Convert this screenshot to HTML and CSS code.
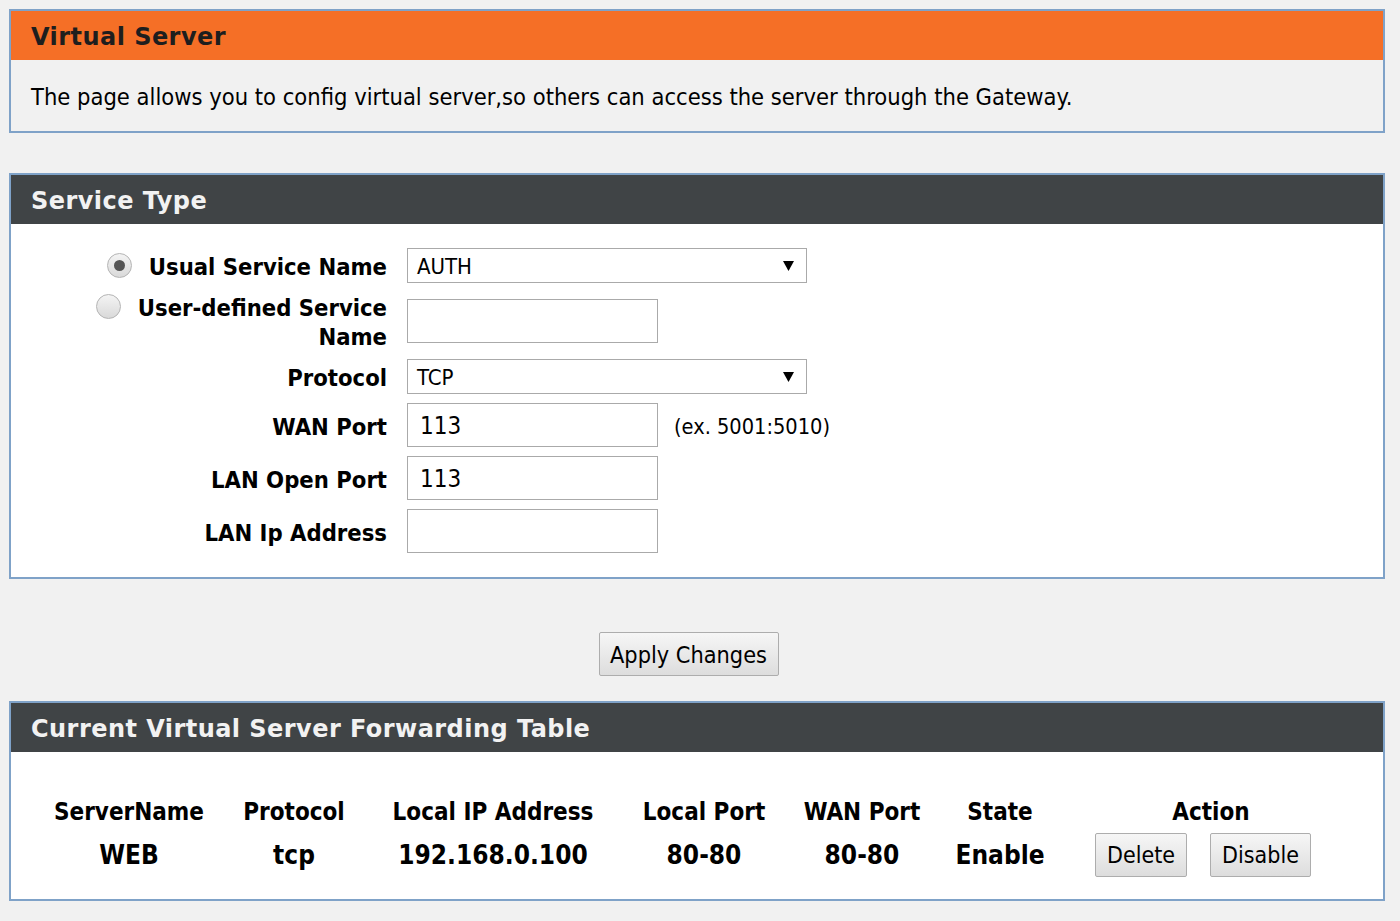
FILE: index.html
```html
<!DOCTYPE html>
<html>
<head>
<meta charset="utf-8">
<title>Virtual Server</title>
<link rel="stylesheet" href="styles.css">
</head>
<body>
<section class="panel panel-intro">
  <h1 class="panel-title title-orange">Virtual Server</h1>
  <p class="intro-text">The page allows you to config virtual server,so others can access the server through the Gateway.</p>
</section>

<section class="panel panel-form">
  <h2 class="panel-title title-dark">Service Type</h2>
  <div class="form-grid">
    <div class="label"><span class="radio checked"></span>Usual Service Name</div>
    <div class="field"><div class="select"><span>AUTH</span><svg class="arrow" width="11" height="10" viewBox="0 0 11 10"><path d="M0 0H11L5.5 10Z" fill="#000"/></svg></div></div>

    <div class="label"><span class="radio"></span>User-defined Service Name</div>
    <div class="field"><div class="input"></div></div>

    <div class="label">Protocol</div>
    <div class="field"><div class="select"><span>TCP</span><svg class="arrow" width="11" height="10" viewBox="0 0 11 10"><path d="M0 0H11L5.5 10Z" fill="#000"/></svg></div></div>

    <div class="label">WAN Port</div>
    <div class="field"><div class="input">113</div><span class="hint">(ex. 5001:5010)</span></div>

    <div class="label">LAN Open Port</div>
    <div class="field"><div class="input">113</div></div>

    <div class="label">LAN Ip Address</div>
    <div class="field"><div class="input"></div></div>
  </div>
</section>

<div class="apply-row"><button class="btn btn-apply">Apply Changes</button></div>

<section class="panel panel-table">
  <h2 class="panel-title title-dark">Current Virtual Server Forwarding Table</h2>
  <div class="fw-table">
    <div class="th">ServerName</div>
    <div class="th">Protocol</div>
    <div class="th">Local IP Address</div>
    <div class="th">Local Port</div>
    <div class="th">WAN Port</div>
    <div class="th">State</div>
    <div class="th">Action</div>

    <div class="td">WEB</div>
    <div class="td">tcp</div>
    <div class="td">192.168.0.100</div>
    <div class="td">80-80</div>
    <div class="td">80-80</div>
    <div class="td">Enable</div>
    <div class="td actions"><button class="btn btn-small btn-delete">Delete</button><button class="btn btn-small btn-disable">Disable</button></div>
  </div>
</section>
</body>
</html>
```

FILE: styles.css
```css
html, body {
  margin: 0;
  padding: 0;
  background: #f1f1f1;
}
body {
  padding: 9px 15px 0 9px;
  font-family: "DejaVu Sans", Tahoma, sans-serif;
  font-stretch: condensed;
  color: #000;
}
.panel {
  border: 2px solid #7fa2c8;
}
.panel-intro {
  background: #f1f1f1;
}
.panel-form, .panel-table {
  background: #fff;
}
.panel-form {
  margin-top: 40px;
}
.panel-title {
  margin: 0;
  height: 49px;
  box-sizing: border-box;
  padding: 4px 0 0 20px;
  line-height: 45px;
  font-family: "DejaVu Sans", Verdana, sans-serif;
  font-stretch: normal;
  font-weight: bold;
  font-size: 24px;
  letter-spacing: 0.45px;
}
.title-orange {
  background: #f56f26;
  color: #1e1e1e;
}
.title-dark {
  background: #404446;
  color: #f2f2f2;
}
.intro-text {
  margin: 0;
  height: 71px;
  box-sizing: border-box;
  padding: 4px 0 0 20px;
  line-height: 67px;
  font-size: 23.5px;
}

.form-grid {
  display: grid;
  grid-template-columns: 330px 1fr;
  column-gap: 20px;
  row-gap: 9px;
  padding: 24px 0 24px 46px;
  align-items: center;
}
.label {
  text-align: right;
  font-weight: bold;
  font-size: 23.6px;
  line-height: 29px;
  padding-top: 2px;
  margin-bottom: -2px;
}
.radio {
  display: inline-block;
  width: 23px;
  height: 23px;
  border: 1px solid #b4b4b4;
  border-radius: 50%;
  background: linear-gradient(#f4f4f4, #d9d9d9);
  vertical-align: 3.5px;
  margin: -6px 17px -6px 0;
  position: relative;
  box-sizing: content-box;
}
.radio.checked::after {
  content: "";
  position: absolute;
  left: 6px;
  top: 6px;
  width: 11px;
  height: 11px;
  border-radius: 50%;
  background: #555;
}
.field {
  display: flex;
  align-items: center;
}
.select {
  width: 400px;
  height: 35px;
  box-sizing: border-box;
  border: 1px solid #aaa;
  background: #fff;
  display: flex;
  align-items: center;
  justify-content: space-between;
  padding: 2px 12px 0 9px;
  font-size: 22px;
}
.arrow {
  display: block;
  margin-top: -2px;
}
.input {
  width: 251px;
  height: 44px;
  box-sizing: border-box;
  border: 1px solid #aaa;
  background: #fff;
  padding: 3px 0 0 12px;
  line-height: 39px;
  font-size: 24px;
}
.hint {
  margin-left: 16px;
  padding-top: 3px;
  font-size: 21.6px;
}

.apply-row {
  display: flex;
  justify-content: center;
  padding: 53px 0 25px 0;
}
.btn {
  font-family: "DejaVu Sans", Tahoma, sans-serif;
  font-stretch: condensed;
  color: #000;
  border: 1px solid #adadad;
  border-radius: 2px;
  background: linear-gradient(#f6f6f6, #dddddd);
  padding: 0;
  margin: 0;
}
.btn-apply {
  width: 180px;
  height: 44px;
  font-size: 23.3px;
  margin-right: 17px;
}
.btn-small {
  height: 44px;
  font-size: 23px;
}
.btn-delete { width: 92px; }
.btn-disable { width: 101px; margin-left: 23px; }

.fw-table {
  display: grid;
  grid-template-columns: 190px 140px 258px 164px 152px 124px 298px;
  padding: 46px 0 22px 23px;
  font-weight: bold;
  font-size: 24px;
  text-align: center;
  align-items: center;
}
.th {
  line-height: 29px;
  height: 29px;
  margin-bottom: 6px;
}
.td {
  height: 44px;
  line-height: 44px;
  font-size: 26px;
}
.actions {
  display: flex;
  justify-content: center;
  font-weight: normal;
  padding-right: 16px;
}
```
